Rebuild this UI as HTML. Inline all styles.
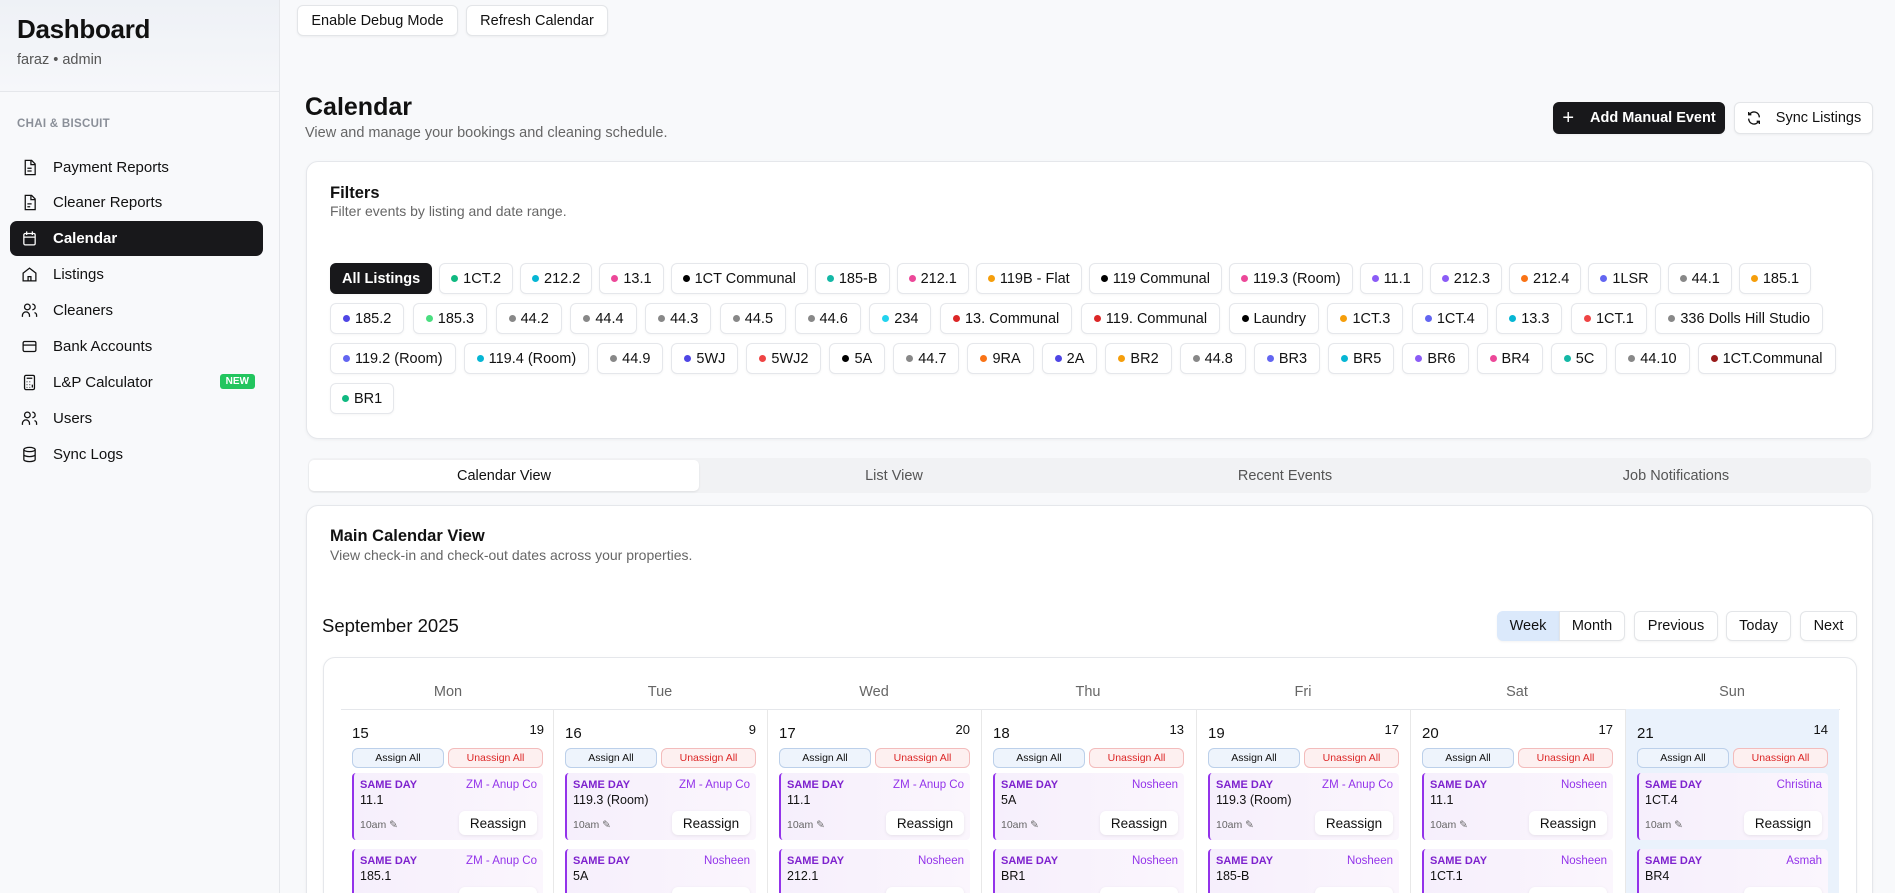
<!DOCTYPE html>
<html><head><meta charset="utf-8"><style>
*{box-sizing:border-box;margin:0;padding:0}
html,body{width:1895px;height:893px;overflow:hidden}
body{font-family:"Liberation Sans",sans-serif;background:#f8f9fb;color:#111}
#w{position:relative;width:1895px;height:893px;overflow:hidden}
.sb{position:absolute;left:0;top:0;width:280px;height:893px;background:#f8f9fb;border-right:1px solid #e5e7eb}
.sbh{height:92px;border-bottom:1px solid #e5e7eb;padding:14px 17px;background:linear-gradient(#eef1f6,#f6f7fa)}
.sbh h1{font-size:26px;font-weight:700;letter-spacing:-.3px}
.sbh p{font-size:14.5px;color:#555;margin-top:7px}
.grp{position:absolute;left:17px;top:118px;font-size:11.5px;font-weight:700;color:#8a8f98;letter-spacing:.3px}
.nav{position:absolute;left:10px;width:253px;height:35px;border-radius:7px;font-size:15px;display:flex;align-items:center;padding-left:43px;color:#111}
.nav svg{position:absolute;left:11px;top:9px;width:17px;height:17px;fill:none;stroke:currentColor;stroke-width:1.8}
.nav.act{background:#18181b;color:#fff;font-weight:700}
.new{position:absolute;right:8px;top:9px;background:#22c55e;color:#fff;font-size:10px;font-weight:700;padding:2px 6px;border-radius:3px}
.btn{position:absolute;background:#fff;border:1px solid #e3e5e8;border-radius:6px;font-size:14.5px;display:flex;align-items:center;justify-content:center;box-shadow:0 1px 2px rgba(0,0,0,.05)}
.card{position:absolute;background:#fff;border:1px solid #e5e7eb;border-radius:12px;box-shadow:0 1px 3px rgba(0,0,0,.05)}
.row{position:absolute;left:330px;display:flex;gap:7px}
.chip{height:31px;border:1px solid #e5e7eb;border-radius:6px;background:#fff;font-size:14.5px;display:flex;align-items:center;padding:0 11px;white-space:nowrap;box-shadow:0 1px 2px rgba(0,0,0,.04)}
.r2 .chip,.r3 .chip{padding:0 12px}
.r2{gap:8.5px}.r3{gap:8px}
.chip i{width:7px;height:7px;border-radius:50%;display:inline-block;margin-right:5px}
.chip.on{background:#18181b;color:#fff;font-weight:700;border-color:#18181b}
.tabs{position:absolute;left:308px;top:458px;width:1563px;height:35px;background:#f1f2f4;border-radius:7px}
.tab{position:absolute;top:0;height:35px;display:flex;align-items:center;justify-content:center;font-size:14.5px;color:#555;width:390px}
.col{position:absolute;top:709px;width:214px;height:184px;border-left:1px solid #e8e8e8}
.dn{position:absolute;left:11px;top:16px;font-size:15px}
.cnt{position:absolute;right:11px;top:13px;font-size:13px}
.aa,.ua{position:absolute;top:39px;height:20px;border-radius:6px;font-size:10.5px;display:flex;align-items:center;justify-content:center}
.aa{left:11px;width:92px;background:#eef4fc;border:1px solid #bcd0ea}
.ua{left:107px;width:95px;background:#fdf0f0;border:1px solid #f3bcbc;color:#dc2626}
.ev{position:absolute;left:11px;width:191px;height:67px;border-left:2px solid #9333ea;border-radius:4px;background:linear-gradient(90deg,#f6effc,#fbf6fd)}
.ev b{position:absolute;left:6px;top:6px;font-size:11px;color:#7e22ce}
.ev .nm{position:absolute;right:6px;top:6px;font-size:11.5px;color:#9333ea}
.ev .l{position:absolute;left:6px;top:20px;font-size:12.5px}
.ev .t{position:absolute;left:6px;top:46px;font-size:10.5px;color:#666}
.ev .r{position:absolute;right:6px;top:38px;width:78px;height:24px;background:#fff;border-radius:6px;font-size:13.5px;display:flex;align-items:center;justify-content:center;box-shadow:0 1px 3px rgba(0,0,0,.08)}
.dh{position:absolute;top:684px;font-size:14.5px;color:#666;width:214px;text-align:center}
</style></head><body><div id="w">
<div class="sb">
<div class="sbh"><h1>Dashboard</h1><p>faraz • admin</p></div>
<div class="grp">CHAI &amp; BISCUIT</div>
<div class="nav" style="top:150px"><svg viewBox="0 0 24 24"><path d="M6 2h9l5 5v15H6z M14 2v6h6 M9 13h6 M9 17h6"/></svg>Payment Reports</div>
<div class="nav" style="top:185px"><svg viewBox="0 0 24 24"><path d="M6 2h9l5 5v15H6z M14 2v6h6 M9 14h6 M9 18h4"/></svg>Cleaner Reports</div>
<div class="nav act" style="top:221px"><svg viewBox="0 0 24 24"><rect x="4" y="5" width="16" height="16" rx="2"/><path d="M8 2v5M16 2v5M4 10h16"/></svg>Calendar</div>
<div class="nav" style="top:257px"><svg viewBox="0 0 24 24"><path d="M3 10l9-7 9 7v11H3z M10 21v-6h4v6"/></svg>Listings</div>
<div class="nav" style="top:293px"><svg viewBox="0 0 24 24"><circle cx="9" cy="7" r="4"/><path d="M2 21v-2a5 5 0 0 1 10 0v2 M16 3a4 4 0 0 1 0 8 M22 21v-2a4 4 0 0 0-3-4"/></svg>Cleaners</div>
<div class="nav" style="top:329px"><svg viewBox="0 0 24 24"><rect x="3" y="5" width="18" height="14" rx="2"/><path d="M3 10h18"/></svg>Bank Accounts</div>
<div class="nav" style="top:365px"><svg viewBox="0 0 24 24"><rect x="5" y="2" width="14" height="20" rx="2"/><path d="M8 6h8M8 11h1M12 11h1M16 11h0M8 15h1M12 15h1M8 19h1M12 19h1M16 15v4"/></svg>L&amp;P Calculator<span class="new">NEW</span></div>
<div class="nav" style="top:401px"><svg viewBox="0 0 24 24"><circle cx="9" cy="7" r="4"/><path d="M2 21v-2a5 5 0 0 1 10 0v2 M16 3a4 4 0 0 1 0 8 M22 21v-2a4 4 0 0 0-3-4"/></svg>Users</div>
<div class="nav" style="top:437px"><svg viewBox="0 0 24 24"><ellipse cx="12" cy="5" rx="8" ry="3"/><path d="M4 5v14c0 1.7 3.6 3 8 3s8-1.3 8-3V5 M4 12c0 1.7 3.6 3 8 3s8-1.3 8-3"/></svg>Sync Logs</div>
</div>

<div class="btn" style="left:297px;top:5px;width:161px;height:31px">Enable Debug Mode</div>
<div class="btn" style="left:466px;top:5px;width:142px;height:31px">Refresh Calendar</div>

<div style="position:absolute;left:305px;top:93px;font-size:25px;font-weight:700">Calendar</div>
<div style="position:absolute;left:305px;top:125px;font-size:14.5px;color:#666">View and manage your bookings and cleaning schedule.</div>
<div class="btn" style="left:1553px;top:102px;width:172px;height:32px;background:#18181b;color:#fff;font-weight:700;border-color:#18181b"><span style="font-size:20px;font-weight:400;margin-right:16px">+</span>Add Manual Event</div>
<div class="btn" style="left:1734px;top:102px;width:139px;height:32px"><svg width="16" height="16" viewBox="0 0 24 24" fill="none" stroke="#111" stroke-width="2" style="margin-right:14px"><path d="M20 11A8 8 0 0 0 5 7M4 3v4h4M4 13a8 8 0 0 0 15 4M20 21v-4h-4"/></svg>Sync Listings</div>

<div class="card" style="left:306px;top:161px;width:1567px;height:278px"></div>
<div style="position:absolute;left:330px;top:184px;font-size:16.5px;font-weight:700">Filters</div>
<div style="position:absolute;left:330px;top:203px;font-size:14px;color:#666">Filter events by listing and date range.</div>

<div class="row" style="top:263px">
<div class="chip on">All Listings</div>
<div class="chip"><i style="background:#10b981"></i>1CT.2</div>
<div class="chip"><i style="background:#06b6d4"></i>212.2</div>
<div class="chip"><i style="background:#ec4899"></i>13.1</div>
<div class="chip"><i style="background:#000"></i>1CT Communal</div>
<div class="chip"><i style="background:#14b8a6"></i>185-B</div>
<div class="chip"><i style="background:#ec4899"></i>212.1</div>
<div class="chip"><i style="background:#f59e0b"></i>119B - Flat</div>
<div class="chip"><i style="background:#000"></i>119 Communal</div>
<div class="chip"><i style="background:#ec4899"></i>119.3 (Room)</div>
<div class="chip"><i style="background:#8b5cf6"></i>11.1</div>
<div class="chip"><i style="background:#8b5cf6"></i>212.3</div>
<div class="chip"><i style="background:#f97316"></i>212.4</div>
<div class="chip"><i style="background:#6366f1"></i>1LSR</div>
<div class="chip"><i style="background:#888"></i>44.1</div>
<div class="chip"><i style="background:#f59e0b"></i>185.1</div>
</div>
<div class="row r2" style="top:303px">
<div class="chip"><i style="background:#4f46e5"></i>185.2</div>
<div class="chip"><i style="background:#4ade80"></i>185.3</div>
<div class="chip"><i style="background:#888"></i>44.2</div>
<div class="chip"><i style="background:#888"></i>44.4</div>
<div class="chip"><i style="background:#888"></i>44.3</div>
<div class="chip"><i style="background:#888"></i>44.5</div>
<div class="chip"><i style="background:#888"></i>44.6</div>
<div class="chip"><i style="background:#22d3ee"></i>234</div>
<div class="chip"><i style="background:#dc2626"></i>13. Communal</div>
<div class="chip"><i style="background:#dc2626"></i>119. Communal</div>
<div class="chip"><i style="background:#000"></i>Laundry</div>
<div class="chip"><i style="background:#f59e0b"></i>1CT.3</div>
<div class="chip"><i style="background:#6366f1"></i>1CT.4</div>
<div class="chip"><i style="background:#06b6d4"></i>13.3</div>
<div class="chip"><i style="background:#ef4444"></i>1CT.1</div>
<div class="chip"><i style="background:#888"></i>336 Dolls Hill Studio</div>
</div>
<div class="row r3" style="top:343px">
<div class="chip"><i style="background:#6366f1"></i>119.2 (Room)</div>
<div class="chip"><i style="background:#06b6d4"></i>119.4 (Room)</div>
<div class="chip"><i style="background:#888"></i>44.9</div>
<div class="chip"><i style="background:#4f46e5"></i>5WJ</div>
<div class="chip"><i style="background:#ef4444"></i>5WJ2</div>
<div class="chip"><i style="background:#000"></i>5A</div>
<div class="chip"><i style="background:#888"></i>44.7</div>
<div class="chip"><i style="background:#f97316"></i>9RA</div>
<div class="chip"><i style="background:#4f46e5"></i>2A</div>
<div class="chip"><i style="background:#f59e0b"></i>BR2</div>
<div class="chip"><i style="background:#888"></i>44.8</div>
<div class="chip"><i style="background:#6366f1"></i>BR3</div>
<div class="chip"><i style="background:#06b6d4"></i>BR5</div>
<div class="chip"><i style="background:#8b5cf6"></i>BR6</div>
<div class="chip"><i style="background:#ec4899"></i>BR4</div>
<div class="chip"><i style="background:#14b8a6"></i>5C</div>
<div class="chip"><i style="background:#888"></i>44.10</div>
<div class="chip"><i style="background:#991b1b"></i>1CT.Communal</div>
</div>
<div class="row" style="top:383px">
<div class="chip"><i style="background:#10b981"></i>BR1</div>
</div>

<div class="tabs">
<div class="tab" style="left:1px;top:2px;height:31px;background:#fff;border-radius:5px;color:#111;box-shadow:0 1px 2px rgba(0,0,0,.08)">Calendar View</div>
<div class="tab" style="left:391px">List View</div>
<div class="tab" style="left:782px">Recent Events</div>
<div class="tab" style="left:1173px">Job Notifications</div>
</div>

<div class="card" style="left:306px;top:505px;width:1567px;height:420px"></div>
<div style="position:absolute;left:330px;top:527px;font-size:16.5px;font-weight:700">Main Calendar View</div>
<div style="position:absolute;left:330px;top:547px;font-size:14px;color:#666">View check-in and check-out dates across your properties.</div>
<div style="position:absolute;left:322px;top:615px;font-size:18.5px">September 2025</div>

<div class="btn" style="left:1497px;top:611px;width:62px;height:30px;background:#dbe9fb;border-color:#dbe9fb;border-radius:6px 0 0 6px">Week</div>
<div class="btn" style="left:1559px;top:611px;width:66px;height:30px;border-radius:0 6px 6px 0">Month</div>
<div class="btn" style="left:1634px;top:611px;width:84px;height:30px">Previous</div>
<div class="btn" style="left:1726px;top:611px;width:65px;height:30px">Today</div>
<div class="btn" style="left:1800px;top:611px;width:57px;height:30px">Next</div>

<div class="card" style="left:323px;top:657px;width:1534px;height:260px"></div>
<div style="position:absolute;left:341px;top:709px;width:1499px;height:1px;background:#e5e7eb"></div>
<div class="dh" style="left:341px">Mon</div><div class="dh" style="left:553px">Tue</div><div class="dh" style="left:767px">Wed</div><div class="dh" style="left:981px">Thu</div><div class="dh" style="left:1196px">Fri</div><div class="dh" style="left:1410px">Sat</div><div class="dh" style="left:1625px">Sun</div>

<div class="col" style="left:341px;border-left:none"><span class="dn">15</span><span class="cnt">19</span><div class="aa">Assign All</div><div class="ua">Unassign All</div>
<div class="ev" style="top:64px"><b>SAME DAY</b><span class="nm">ZM - Anup Co</span><span class="l">11.1</span><span class="t">10am ✎</span><span class="r">Reassign</span></div>
<div class="ev" style="top:140px"><b>SAME DAY</b><span class="nm">ZM - Anup Co</span><span class="l">185.1</span><span class="r">Reassign</span></div></div>
<div class="col" style="left:553px"><span class="dn">16</span><span class="cnt">9</span><div class="aa">Assign All</div><div class="ua">Unassign All</div>
<div class="ev" style="top:64px"><b>SAME DAY</b><span class="nm">ZM - Anup Co</span><span class="l">119.3 (Room)</span><span class="t">10am ✎</span><span class="r">Reassign</span></div>
<div class="ev" style="top:140px"><b>SAME DAY</b><span class="nm">Nosheen</span><span class="l">5A</span><span class="r">Reassign</span></div></div>
<div class="col" style="left:767px"><span class="dn">17</span><span class="cnt">20</span><div class="aa">Assign All</div><div class="ua">Unassign All</div>
<div class="ev" style="top:64px"><b>SAME DAY</b><span class="nm">ZM - Anup Co</span><span class="l">11.1</span><span class="t">10am ✎</span><span class="r">Reassign</span></div>
<div class="ev" style="top:140px"><b>SAME DAY</b><span class="nm">Nosheen</span><span class="l">212.1</span><span class="r">Reassign</span></div></div>
<div class="col" style="left:981px"><span class="dn">18</span><span class="cnt">13</span><div class="aa">Assign All</div><div class="ua">Unassign All</div>
<div class="ev" style="top:64px"><b>SAME DAY</b><span class="nm">Nosheen</span><span class="l">5A</span><span class="t">10am ✎</span><span class="r">Reassign</span></div>
<div class="ev" style="top:140px"><b>SAME DAY</b><span class="nm">Nosheen</span><span class="l">BR1</span><span class="r">Reassign</span></div></div>
<div class="col" style="left:1196px"><span class="dn">19</span><span class="cnt">17</span><div class="aa">Assign All</div><div class="ua">Unassign All</div>
<div class="ev" style="top:64px"><b>SAME DAY</b><span class="nm">ZM - Anup Co</span><span class="l">119.3 (Room)</span><span class="t">10am ✎</span><span class="r">Reassign</span></div>
<div class="ev" style="top:140px"><b>SAME DAY</b><span class="nm">Nosheen</span><span class="l">185-B</span><span class="r">Reassign</span></div></div>
<div class="col" style="left:1410px"><span class="dn">20</span><span class="cnt">17</span><div class="aa">Assign All</div><div class="ua">Unassign All</div>
<div class="ev" style="top:64px"><b>SAME DAY</b><span class="nm">Nosheen</span><span class="l">11.1</span><span class="t">10am ✎</span><span class="r">Reassign</span></div>
<div class="ev" style="top:140px"><b>SAME DAY</b><span class="nm">Nosheen</span><span class="l">1CT.1</span><span class="r">Reassign</span></div></div>
<div class="col" style="left:1625px;width:214px;background:#eaf2fc"><span class="dn">21</span><span class="cnt">14</span><div class="aa">Assign All</div><div class="ua">Unassign All</div>
<div class="ev" style="top:64px"><b>SAME DAY</b><span class="nm">Christina</span><span class="l">1CT.4</span><span class="t">10am ✎</span><span class="r">Reassign</span></div>
<div class="ev" style="top:140px"><b>SAME DAY</b><span class="nm">Asmah</span><span class="l">BR4</span><span class="r">Reassign</span></div></div>
</div></body></html>
